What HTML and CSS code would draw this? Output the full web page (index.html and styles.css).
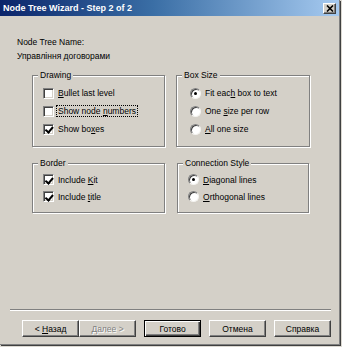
FILE: index.html
```html
<!DOCTYPE html>
<html lang="uk">
  <head>
    <meta charset="UTF-8" />
    <title>Node Tree Wizard - Step 2 of 2</title>
    <link rel="stylesheet" href="styles.css">
  </head>
  <body>
    <div class="window">
      <div class="titlebar">
        <span class="title">Node Tree Wizard - Step 2 of 2</span>
        <span class="close">
          <svg width="8" height="7" viewBox="0 0 8 7">
            <path d="M1 0.5 L7 6.5 M7 0.5 L1 6.5" stroke="#000" stroke-width="1.6" />
          </svg>
        </span>
      </div>

      <div class="content">
        <div class="name-block">
          <p>Node Tree Name:</p>
          <p>Управління договорами</p>
        </div>

        <div class="groups">
          <!-- Drawing -->
          <div class="group">
            <span class="group-label">Drawing</span>
            <div class="row"><span class="check"></span><span><u>B</u>ullet last level</span></div>
            <div class="row"><span class="check"></span><span class="focus">Show node <u>n</u>umbers</span></div>
            <div class="row"><span class="check on"></span><span>Show bo<u>x</u>es</span></div>
          </div>

          <!-- Box Size -->
          <div class="group wide-pad">
            <span class="group-label">Box Size</span>
            <div class="row"><span class="radio on"></span><span>Fit eac<u>h</u> box to text</span></div>
            <div class="row"><span class="radio"></span><span>One <u>s</u>ize per row</span></div>
            <div class="row"><span class="radio"></span><span><u>A</u>ll one size</span></div>
          </div>

          <!-- Border -->
          <div class="group compact">
            <span class="group-label">Border</span>
            <div class="row"><span class="check on"></span><span>Include <u>K</u>it</span></div>
            <div class="row"><span class="check on"></span><span>Include <u>t</u>itle</span></div>
          </div>

          <!-- Connection Style -->
          <div class="group compact shifted">
            <span class="group-label">Connection Style</span>
            <div class="row"><span class="radio on"></span><span><u>D</u>iagonal lines</span></div>
            <div class="row"><span class="radio"></span><span><u>O</u>rthogonal lines</span></div>
          </div>
        </div>

        <div class="footer">
          <div class="separator"></div>
          <div class="buttons">
            <button class="btn">&lt; <u>Н</u>азад</button>
            <button class="btn disabled">Далее &gt;</button>
            <button class="btn default">Готово</button>
            <button class="btn">Отмена</button>
            <button class="btn">Справка</button>
          </div>
        </div>
      </div>
    </div>
  </body>
</html>
```

FILE: styles.css
```css
* {
  margin: 0;
  padding: 0;
  box-sizing: border-box;
}

body {
  width: 342px;
  height: 347px;
  background: #dcd9d2;
  font-family: 'Liberation Sans', Arial, sans-serif;
  font-size: 8.5px;
  color: #000;
  overflow: hidden;
}

.window {
  width: 340px;
  height: 345px;
  background: #d4d0c8;
  border-right: 1px solid #808080;
  border-bottom: 1px solid #808080;
  box-shadow: 1px 1px 0 #404040;
  display: flex;
  flex-direction: column;
}

/* title bar */
.titlebar {
  height: 16px;
  display: flex;
  align-items: center;
  justify-content: space-between;
  padding: 0 3px 0 3px;
  background: linear-gradient(to right, #0a246a 0%, #3a6ea5 45%, #a6caf0 100%);
}

.title {
  color: #fff;
  font-weight: bold;
  font-size: 9px;
  letter-spacing: 0;
}

.close {
  width: 13px;
  height: 11px;
  display: flex;
  align-items: center;
  justify-content: center;
  background: #d4d0c8;
  border: 1px solid;
  border-color: #fff #404040 #404040 #fff;
  box-shadow: inset -1px -1px 0 #808080;
}

/* main area */
.content {
  flex: 1;
  display: flex;
  flex-direction: column;
  padding: 19px 0 7px 17px;
}

.name-block p {
  line-height: 14px;
}

.groups {
  display: grid;
  grid-template-columns: 133px 134px;
  column-gap: 11px;
  row-gap: 16px;
  margin: 12px 0 0 15px;
}

.group {
  position: relative;
  border: 1px solid #808080;
  box-shadow: inset 1px 1px 0 #fff, 1px 1px 0 #fff;
  padding: 8px 0 8px 10px;
}

.group.wide-pad {
  padding-left: 13px;
}

.group.compact {
  padding-top: 7px;
  padding-bottom: 7px;
}

.group.shifted {
  margin-left: 1px;
  margin-right: 1px;
  padding-left: 10px;
}

.group-label {
  position: absolute;
  top: -7px;
  left: 5px;
  padding: 0 2px;
  line-height: 12px;
  background: #d4d0c8;
}

.row {
  height: 18px;
  display: flex;
  align-items: center;
  gap: 4px;
}

.compact .row {
  height: 17px;
}

.check {
  position: relative;
  flex: none;
  width: 11px;
  height: 11px;
  background: #fff;
  border: 1px solid;
  border-color: #808080 #fff #fff #808080;
  box-shadow: inset 1px 1px 0 #404040, inset -1px -1px 0 #d4d0c8;
}

.check.on::after {
  content: "";
  position: absolute;
  left: 3px;
  top: 0.5px;
  width: 2.5px;
  height: 5.5px;
  border: solid #000;
  border-width: 0 2px 2px 0;
  transform: rotate(40deg);
}

.radio {
  position: relative;
  flex: none;
  width: 11px;
  height: 11px;
  border-radius: 50%;
  background: #fff;
  border: 1px solid;
  border-color: #808080 #f4f3f0 #f4f3f0 #808080;
  box-shadow: inset 1px 1px 0 #404040;
}

.radio.on::after {
  content: "";
  position: absolute;
  left: 3px;
  top: 3px;
  width: 3px;
  height: 3px;
  border-radius: 50%;
  background: #000;
}

.focus {
  outline: 1px dotted #000;
  outline-offset: 0;
  padding: 0 1px;
  margin-left: -1px;
}

/* footer */
.footer {
  margin-top: auto;
}

.separator {
  margin: 0 8px 0 -7px;
  border-top: 1px solid #808080;
  border-bottom: 1px solid #fff;
}

.buttons {
  display: flex;
  gap: 8px;
  margin: 9px 0 0 5px;
}

.btn {
  width: 57px;
  height: 17px;
  font-family: inherit;
  font-size: 8.5px;
  color: #000;
  background: #d4d0c8;
  border: 1px solid;
  border-color: #fff #404040 #404040 #fff;
  box-shadow: inset -1px -1px 0 #808080;
}

.btn.disabled {
  margin-left: -8px;
  color: #808080;
  text-shadow: 1px 1px 0 #fff;
}

.btn.default {
  border-color: #000;
  box-shadow: inset 1px 1px 0 #fff, inset -1px -1px 0 #404040, inset -2px -2px 0 #808080;
}
```
